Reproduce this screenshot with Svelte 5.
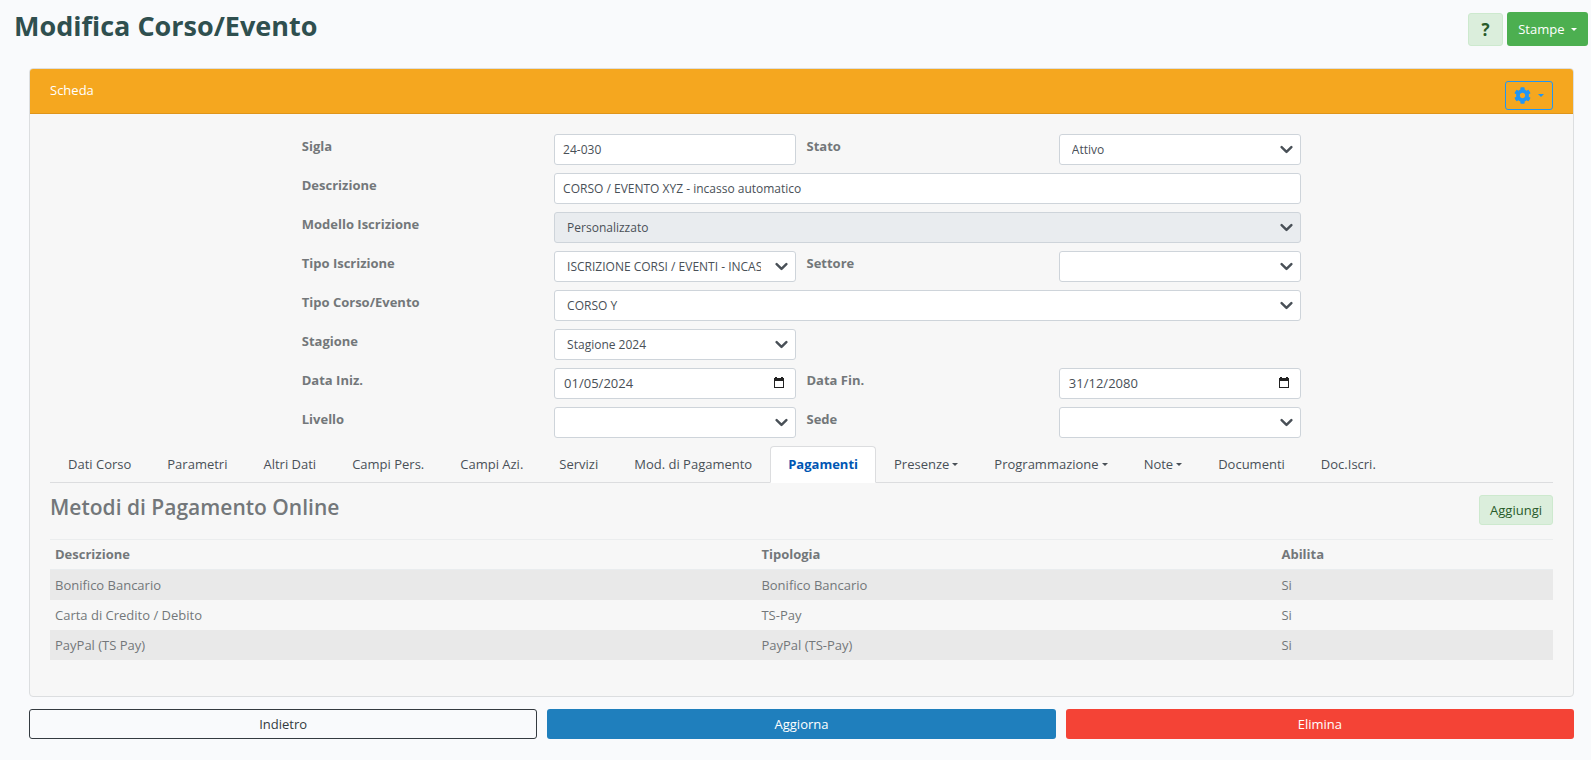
<script>
  const statoOptions = ["Attivo", "Chiuso"];

  const tabs = [
    { label: "Dati Corso" },
    { label: "Parametri" },
    { label: "Altri Dati" },
    { label: "Campi Pers." },
    { label: "Campi Azi." },
    { label: "Servizi" },
    { label: "Mod. di Pagamento" },
    { label: "Pagamenti" },
    { label: "Presenze", menu: true },
    { label: "Programmazione", menu: true },
    { label: "Note", menu: true },
    { label: "Documenti" },
    { label: "Doc.Iscri." },
  ];
  let active = $state("Pagamenti");

  const metodi = [
    { descrizione: "Bonifico Bancario", tipologia: "Bonifico Bancario", abilita: "Si" },
    { descrizione: "Carta di Credito / Debito", tipologia: "TS-Pay", abilita: "Si" },
    { descrizione: "PayPal (TS Pay)", tipologia: "PayPal (TS-Pay)", abilita: "Si" },
  ];

  function selectTab(e, label) {
    e.preventDefault();
    active = label;
  }
</script>

{#snippet calendar()}
  <button class="calendar" type="button" aria-label="Apri calendario">
    <svg width="10" height="11" viewBox="0 0 10 11">
      <path d="M0 1h1V0h2v1h4V0h2v1h1v10H0zM1 4v6h8V4z" fill="#222" fill-rule="evenodd" />
    </svg>
  </button>
{/snippet}

<header class="page-header">
  <h1>Modifica Corso/Evento</h1>
  <div class="actions">
    <button class="btn help" type="button">?</button>
    <button class="btn stampe" type="button">Stampe <span class="caret"></span></button>
  </div>
</header>

<main>
  <section class="card">
    <div class="card-header">
      <span>Scheda</span>
      <button class="gear" type="button" aria-label="Impostazioni">
        <svg width="17" height="17" viewBox="0 0 512 512">
          <path fill="currentColor" d="M487.4 315.7l-42.6-24.6c4.3-23.2 4.3-47 0-70.2l42.6-24.6c4.9-2.8 7.1-8.6 5.5-14-11.1-35.6-30-67.8-54.7-94.6-3.8-4.1-10-5.1-14.8-2.3L380.8 110c-17.9-15.4-38.5-27.3-60.8-35.1V25.8c0-5.6-3.9-10.5-9.4-11.7-36.7-8.2-74.3-7.8-109.2 0-5.5 1.2-9.4 6.1-9.4 11.7V75c-22.2 7.9-42.8 19.8-60.8 35.1L88.7 85.5c-4.9-2.8-11-1.9-14.8 2.3-24.7 26.7-43.6 58.9-54.7 94.6-1.7 5.4.6 11.2 5.5 14L67.3 221c-4.3 23.2-4.3 47 0 70.2l-42.6 24.6c-4.9 2.8-7.1 8.6-5.5 14 11.1 35.6 30 67.8 54.7 94.6 3.8 4.1 10 5.1 14.8 2.3l42.6-24.6c17.9 15.4 38.5 27.3 60.8 35.1v49.2c0 5.6 3.9 10.5 9.4 11.7 36.7 8.2 74.3 7.8 109.2 0 5.5-1.2 9.4-6.1 9.4-11.7v-49.2c22.2-7.9 42.8-19.8 60.8-35.1l42.6 24.6c4.9 2.8 11 1.9 14.8-2.3 24.7-26.7 43.6-58.9 54.7-94.6 1.5-5.5-.7-11.3-5.6-14.1zM256 336c-44.1 0-80-35.9-80-80s35.9-80 80-80 80 35.9 80 80-35.9 80-80 80z" />
        </svg>
        <span class="caret"></span>
      </button>
    </div>

    <div class="card-body">
      <form class="fields">
        <label for="sigla">Sigla</label>
        <input id="sigla" type="text" value="24-030" />
        <label for="stato">Stato</label>
        <select id="stato">
          {#each statoOptions as stato}
            <option>{stato}</option>
          {/each}
        </select>

        <label for="descrizione">Descrizione</label>
        <input id="descrizione" class="wide" type="text" value="CORSO / EVENTO XYZ - incasso automatico" />

        <label for="modello">Modello Iscrizione</label>
        <select id="modello" class="wide" disabled>
          <option>Personalizzato</option>
        </select>

        <label for="tipo-iscrizione">Tipo Iscrizione</label>
        <select id="tipo-iscrizione">
          <option>ISCRIZIONE CORSI / EVENTI - INCASSO AUTOMATICO</option>
        </select>
        <label for="settore">Settore</label>
        <select id="settore"><option></option></select>

        <label for="tipo-corso">Tipo Corso/Evento</label>
        <select id="tipo-corso" class="wide">
          <option>CORSO Y</option>
        </select>

        <label for="stagione">Stagione</label>
        <select id="stagione">
          <option>Stagione 2024</option>
        </select>

        <label class="first" for="data-iniz">Data Iniz.</label>
        <div class="date">
          <input id="data-iniz" type="text" value="01/05/2024" />
          {@render calendar()}
        </div>
        <label for="data-fin">Data Fin.</label>
        <div class="date">
          <input id="data-fin" type="text" value="31/12/2080" />
          {@render calendar()}
        </div>

        <label for="livello">Livello</label>
        <select id="livello"><option></option></select>
        <label for="sede">Sede</label>
        <select id="sede"><option></option></select>
      </form>

      <nav class="tabs">
        {#each tabs as tab}
          <a href="#tab" class:active={active === tab.label} onclick={(e) => selectTab(e, tab.label)}>
            {tab.label}{#if tab.menu}<span class="caret"></span>{/if}
          </a>
        {/each}
      </nav>

      <div class="section-title">
        <h2>Metodi di Pagamento Online</h2>
        <button class="btn add" type="button">Aggiungi</button>
      </div>

      <table>
        <thead>
          <tr>
            <th class="col-descrizione">Descrizione</th>
            <th class="col-tipologia">Tipologia</th>
            <th>Abilita</th>
          </tr>
        </thead>
        <tbody>
          {#each metodi as metodo}
            <tr>
              <td>{metodo.descrizione}</td>
              <td>{metodo.tipologia}</td>
              <td>{metodo.abilita}</td>
            </tr>
          {/each}
        </tbody>
      </table>
    </div>
  </section>

  <footer>
    <button class="btn back" type="button">Indietro</button>
    <button class="btn update" type="button">Aggiorna</button>
    <button class="btn delete" type="button">Elimina</button>
  </footer>
</main>

<style>
  :global(body) {
    background: #f9fafc;
    color: #73777a;
    font-family: "Open Sans", "Noto Sans", sans-serif;
    font-size: 13px;
  }
  * {
    box-sizing: border-box;
  }
  button,
  input,
  select {
    font: inherit;
    margin: 0;
  }
  button {
    cursor: pointer;
  }
  .page-header {
    display: flex;
    justify-content: space-between;
    align-items: flex-start;
    padding: 8px 3px 0 14px;
    height: 68px;
  }
  h1 {
    margin: 0;
    color: #2f4f4f;
    font-size: 27px;
    font-weight: 700;
    line-height: 36px;
  }
  .actions {
    display: flex;
    align-items: flex-end;
    gap: 4px;
    padding-top: 4px;
  }
  .btn {
    height: 30px;
    padding: 0 8px;
    border: 1px solid transparent;
    border-radius: 3px;
    line-height: 18px;
  }
  .help {
    width: 35px;
    height: 33px;
    background: #dbeedc;
    border-color: #cde9ce;
    color: #285b2a;
    font-size: 17px;
    font-weight: 700;
  }
  .stampe {
    width: 81px;
    height: 34px;
    background: #4caf50;
    color: #fff;
  }
  .caret {
    display: inline-block;
    margin-left: 3px;
    vertical-align: 3px;
    border: 3px solid transparent;
    border-top-color: currentColor;
    border-bottom: 0;
  }
  main {
    padding: 0 17px 20px 29px;
  }
  .card {
    background: #f7f7f7;
    border: 1px solid #dcdee0;
    border-radius: 4px;
    overflow: hidden;
  }
  .card-header {
    display: flex;
    justify-content: space-between;
    align-items: flex-start;
    height: 45px;
    padding: 12px 20px 0;
    background: #f5a71f;
    border-bottom: 1px solid #df951a;
    color: #fff;
    line-height: 18px;
  }
  .gear {
    display: flex;
    align-items: center;
    justify-content: center;
    gap: 4px;
    width: 48px;
    height: 29px;
    padding: 0;
    background: transparent;
    border: 1px solid #2196f3;
    border-radius: 3px;
    color: #2196f3;
  }
  .card-body {
    padding: 20px 20px 36px;
  }
  .fields {
    display: grid;
    grid-template-columns: repeat(4, 1fr);
    gap: 8px 10px;
    width: 66.5%;
    margin: 0 auto;
  }
  label {
    font-weight: 700;
    line-height: 24px;
  }
  .first {
    grid-column-start: 1;
  }
  input,
  select {
    width: 100%;
    min-width: 0;
    height: 31px;
    padding: 0 8px;
    background: #fff;
    border: 1px solid #ced4da;
    border-radius: 3px;
    color: #495057;
    font-size: 12px;
  }
  select {
    appearance: none;
    padding: 0 34px 0 12px;
    background: #fff url("data:image/svg+xml,%3csvg xmlns='http://www.w3.org/2000/svg' viewBox='0 0 16 16'%3e%3cpath fill='none' stroke='%23495057' stroke-linecap='round' stroke-linejoin='round' stroke-width='3' d='M2 5l6 6 6-6'/%3e%3c/svg%3e") no-repeat right 7px center / 13px 13px;
  }
  select:disabled {
    background-color: #e9ecef;
    opacity: 1;
  }
  .wide {
    grid-column: span 3;
  }
  .date {
    position: relative;
  }
  .date input {
    padding: 0 32px 2px 9px;
    font-size: 13px;
  }
  .calendar {
    position: absolute;
    top: 9px;
    right: 12px;
    padding: 0;
    border: 0;
    background: none;
    line-height: 0;
  }
  .tabs {
    display: flex;
    margin-top: 8px;
    border-bottom: 1px solid #dcdddf;
  }
  .tabs a {
    margin-bottom: -1px;
    padding: 8px 17px;
    border: 1px solid transparent;
    border-radius: 4px 4px 0 0;
    color: #495057;
    line-height: 19px;
    text-decoration: none;
    white-space: nowrap;
  }
  .tabs a.active {
    background: #fff;
    border-color: #dcdddf #dcdddf #fff;
    color: #0056b3;
    font-weight: 700;
  }
  .section-title {
    display: flex;
    justify-content: space-between;
    align-items: flex-start;
    padding: 12px 0 14px;
  }
  h2 {
    margin: 0;
    font-size: 21px;
    font-weight: 600;
    line-height: 25px;
  }
  .add {
    padding: 0 10px;
    background: #dbeedc;
    border-color: #cde9ce;
    color: #285b2a;
  }
  table {
    width: 100%;
    border-collapse: separate;
    border-spacing: 0;
    table-layout: fixed;
  }
  th,
  td {
    padding: 5px;
    text-align: left;
    line-height: 20px;
  }
  th {
    padding: 4px 5px 5px;
    border-top: 1px solid #ebedee;
    border-bottom: 1px solid #e9ecee;
  }
  .col-descrizione {
    width: 47%;
  }
  .col-tipologia {
    width: 34.6%;
  }
  tbody tr:nth-child(odd) {
    background: #e9e9e9;
  }
  footer {
    display: grid;
    grid-template-columns: repeat(3, 1fr);
    gap: 10px;
    margin-top: 12px;
  }
  .back {
    background: transparent;
    border-color: #343a40;
    color: #343a40;
  }
  .update {
    background: #1f7fbd;
    color: #fff;
  }
  .delete {
    background: #f44336;
    color: #fff;
  }
</style>
